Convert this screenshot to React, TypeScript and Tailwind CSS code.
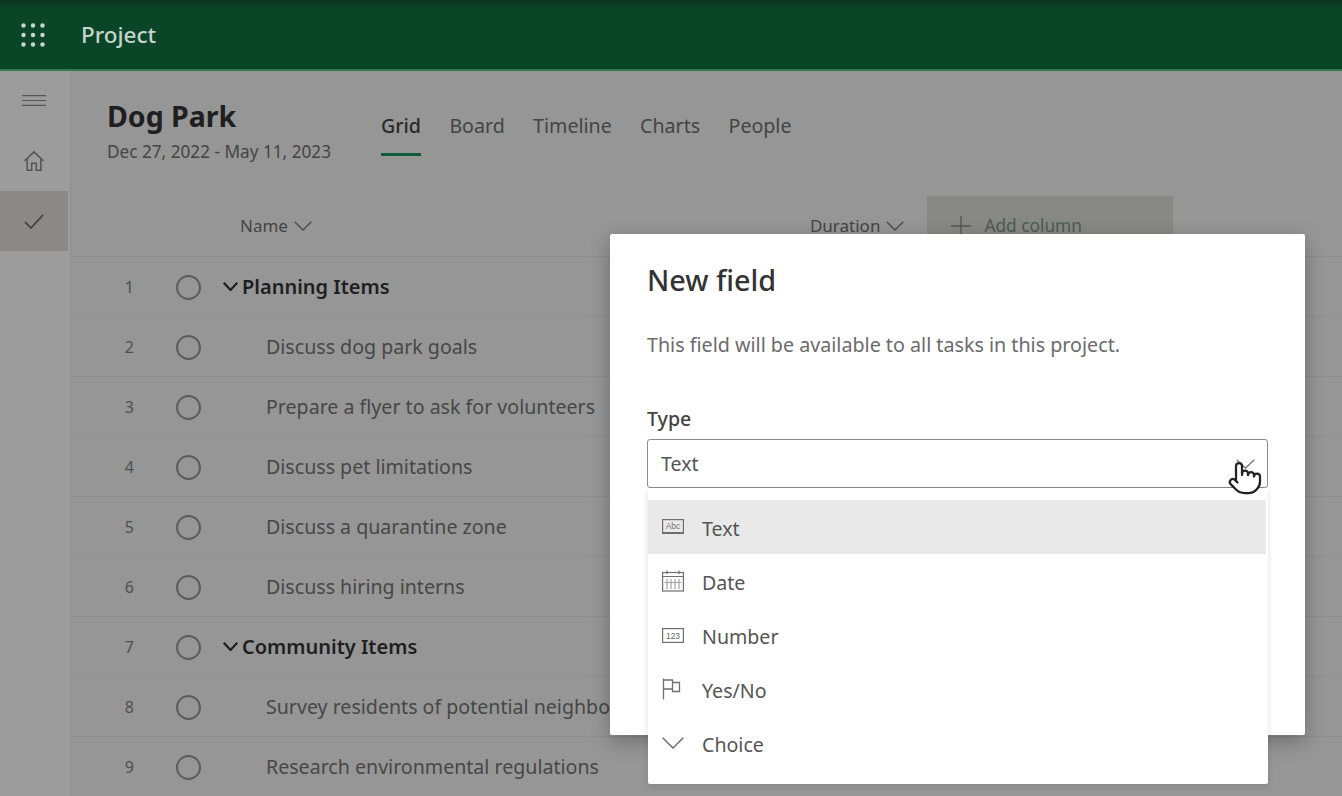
import { Pointer } from 'lucide-react';

const rows = [
  { n: 1, label: 'Planning Items', group: true },
  { n: 2, label: 'Discuss dog park goals' },
  { n: 3, label: 'Prepare a flyer to ask for volunteers' },
  { n: 4, label: 'Discuss pet limitations' },
  { n: 5, label: 'Discuss a quarantine zone' },
  { n: 6, label: 'Discuss hiring interns' },
  { n: 7, label: 'Community Items', group: true },
  { n: 8, label: 'Survey residents of potential neighborhoods' },
  { n: 9, label: 'Research environmental regulations' },
];

const tabs = ['Grid', 'Board', 'Timeline', 'Charts', 'People'];

function Chevron({ w = 18, h = 10, sw = 1.3, color = '#4a4a4a' }: { w?: number; h?: number; sw?: number; color?: string }) {
  return (
    <svg width={w} height={h} viewBox={`0 0 ${w} ${h}`} fill="none" stroke={color} strokeWidth={sw}>
      <path d={`M0.7 0.7 L${w / 2} ${h - 1} L${w - 0.7} 0.7`} />
    </svg>
  );
}

function Waffle() {
  const dots = [];
  for (let y = 0; y < 3; y++) for (let x = 0; x < 3; x++) dots.push(<circle key={`${x}${y}`} cx={2.5 + x * 9.5} cy={2.5 + y * 9.5} r={2.2} fill="#c9d6ce" />);
  return <svg width="24" height="24" viewBox="0 0 24 24">{dots}</svg>;
}

const iconCls = 'fill-none stroke-[#6f6f6f]';

function TypeIcon({ kind }: { kind: string }) {
  if (kind === 'Text')
    return (
      <svg width="22" height="16" viewBox="0 0 22 16" className={iconCls} strokeWidth="1.2">
        <rect x="0.6" y="0.6" width="20.8" height="13.8" />
        <path d="M0.5 14 H21.5" strokeWidth="2" />
        <text x="11" y="10" textAnchor="middle" fontSize="8.5" fill="#777" stroke="none" fontFamily="'Liberation Sans', sans-serif">Abc</text>
      </svg>
    );
  if (kind === 'Date')
    return (
      <svg width="22" height="22" viewBox="0 0 22 22" className={iconCls} strokeWidth="1.2">
        <rect x="0.6" y="2.5" width="20.8" height="18.5" />
        <path d="M0.5 6.5 H21.5 M5 0.5 V4 M17 0.5 V4" />
        <path d="M5 9 V19 M9 9 V19 M13 9 V19 M17 9 V19 M2.5 12.5 H19.5" stroke="#a5a5a5" />
      </svg>
    );
  if (kind === 'Number')
    return (
      <svg width="22" height="15" viewBox="0 0 22 15" className={iconCls} strokeWidth="1.2">
        <rect x="0.6" y="0.6" width="20.8" height="13.8" />
        <text x="11" y="10.5" textAnchor="middle" fontSize="8.5" fill="#666" stroke="none" fontFamily="'Liberation Sans', sans-serif">123</text>
      </svg>
    );
  if (kind === 'Yes/No')
    return (
      <svg width="20" height="22" viewBox="0 0 20 22" className={iconCls}>
        <path d="M1.5 0.5 V21.5 M1.5 2 H10.5 V4.5 H17.5 V13.5 H10.5 V11 H1.5 M10.5 4.5 V11" strokeWidth="1.3" />
      </svg>
    );
  return <Chevron w={22} h={12} color="#666" />;
}

export default function App() {
  return (
    <div className="relative h-[796px] w-[1342px] overflow-hidden bg-[#969696] font-['Noto_Sans',sans-serif] text-[#3c3c3c]">
      <header className="flex h-[71px] items-center border-b-2 border-[#2f7a52] bg-[linear-gradient(#08361f,#0b4527_14%)] pl-[21px]">
        <Waffle />
        <span className="ml-[36px] text-[22.5px] font-medium text-[#c5d5cb]">Project</span>
      </header>

      <div className="flex">
        <aside className="w-[71px] shrink-0 border-r border-[#8f8f8f] bg-[#9c9c9c] pr-[2px]">
          <div className="flex h-[58px] items-center justify-center">
            <svg width="24" height="11" viewBox="0 0 24 11" fill="none" stroke="#555" strokeWidth="1.2">
              <path d="M0 0.7 H24 M0 5.5 H24 M0 10.3 H24" />
            </svg>
          </div>
          <div className="flex h-[62px] items-center justify-center pt-[2px]">
            <svg width="22" height="22" viewBox="0 0 24 24" fill="none" stroke="#555" strokeWidth="1.7">
              <path d="M1.5 12 L12 2 L22.5 12 M4.5 9.5 V22 H9.5 V14.5 H14.5 V22 H19.5 V9.5" />
            </svg>
          </div>
          <div className="flex h-[60px] items-center justify-center bg-[#8a8988]">
            <svg width="20" height="15" viewBox="0 0 20 15" fill="none" stroke="#3c3c3c" strokeWidth="1.6">
              <path d="M1 8 L7 14 L19 1" />
            </svg>
          </div>
        </aside>

        <main className="min-w-0 flex-1">
          <div className="flex h-[66px] box-content pl-[36px] pt-[26px]">
            <div className="w-[274px]">
              <h1 className="text-[28.5px] font-bold leading-[38px] text-[#1f1f1f]">Dog Park</h1>
              <p className="mt-[6px] text-[17.2px] leading-[22px] text-[#444]">Dec 27, 2022 - May 11, 2023</p>
            </div>
            <nav className="mt-[9px] flex gap-[28.4px]">
              {tabs.map((t, i) => (
                <div key={t} className={`h-[50px] pt-[6px] text-[19.6px] leading-[28px] ${i === 0 ? 'border-b-[3px] border-[#0d5b3a] font-medium text-[#2a2a2a]' : 'text-[#444]'}`}>
                  {t}
                </div>
              ))}
            </nav>
          </div>

          <div className="mt-[33px] flex h-[61px] items-center border-b border-[#8e8e8e]">
            <div className="flex items-center gap-[6px] pl-[169px] text-[17px] text-[#444]">
              Name <Chevron />
            </div>
            <div className="ml-[498px] flex items-center gap-[6px] text-[17px] text-[#444]">
              Duration <Chevron />
            </div>
            <div className="ml-[23px] flex h-[61px] w-[246px] items-center gap-[13px] bg-[#888885] pl-[24px] text-[17.3px] text-[#4a5c50]">
              <svg width="20" height="20" viewBox="0 0 20 20" stroke="#555" strokeWidth="1.3"><path d="M10 0 V20 M0 10 H20" /></svg>
              Add column
            </div>
          </div>

          {rows.map((r) => (
            <div key={r.n} className="flex h-[60px] items-center border-b border-[#8e8e8e]">
              <div className="w-[59px] text-right text-[16px] text-[#4f4f4f]"><span className="mr-[-4px]">{r.n}</span></div>
              <div className="ml-[46px] mt-[2px] size-[25px] shrink-0 rounded-full border-2 border-[#5c5c5c]" />
              {r.group ? (
                <div className="ml-[22px] flex items-center gap-[4px] text-[20px] font-semibold text-[#1f1f1f]">
                  <Chevron w={15} h={9} sw={2.2} color="#1f1f1f" />
                  {r.label}
                </div>
              ) : (
                <div className="ml-[65px] whitespace-nowrap text-[19.6px] text-[#474747]">{r.label}</div>
              )}
            </div>
          ))}
        </main>
      </div>

      <div className="absolute left-[610px] top-[234px] h-[501px] w-[695px] rounded-[2px] bg-white pl-[37px] pr-[37px] pt-[27px] shadow-[0_6px_20px_rgba(0,0,0,0.28)]">
        <h2 className="text-[28.8px] font-medium leading-[38px] text-[#333]">New field</h2>
        <p className="mt-[32px] text-[19.7px] leading-[28px] text-[#6b6b6b]">This field will be available to all tasks in this project.</p>
        <label className="mt-[46px] block text-[19.6px] font-medium leading-[28px] text-[#444]">Type</label>
        <div className="mt-[6px] flex h-[49px] w-[621px] items-center justify-between rounded-[3px] border border-[#8c8c8c] pl-[13px] pr-[12px] text-[19.6px] text-[#555]">
          Text
          <Chevron w={19} h={10} color="#777" />
        </div>
      </div>

      <div className="absolute left-[648px] top-[488px] h-[296px] w-[620px] rounded-b-[2px] bg-white pt-[12px] shadow-[0_2px_6px_rgba(0,0,0,0.12)]">
        {['Text', 'Date', 'Number', 'Yes/No', 'Choice'].map((t, i) => (
          <div key={t} className={`flex h-[54px] w-[618px] items-center pt-[4px] text-[19.6px] text-[#555] ${i === 0 ? 'bg-[#e9e9e9]' : ''}`}>
            <div className="flex w-[54px] justify-start pb-[4px] pl-[14px]"><TypeIcon kind={t} /></div>
            {t}
          </div>
        ))}
      </div>

      <Pointer className="absolute left-[1227px] top-[460px] size-[36px] fill-white stroke-[#222]" strokeWidth={1.5} />
    </div>
  );
}
